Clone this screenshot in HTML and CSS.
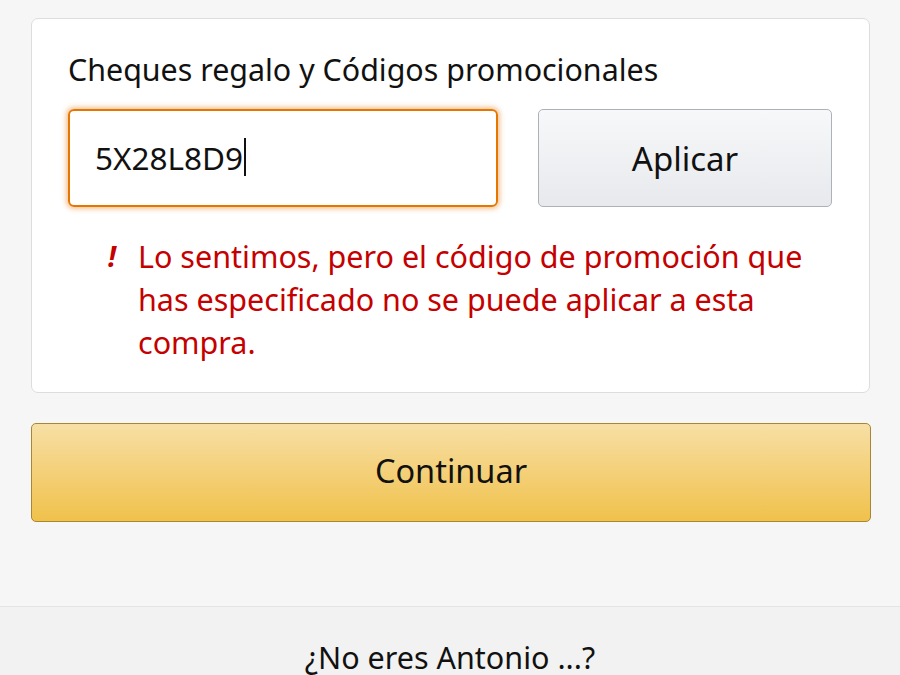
FILE: index.html
```html
<!DOCTYPE html>
<html lang="es">
<head>
<meta charset="utf-8">
<link rel="stylesheet" href="styles.css">
</head>
<body>
<div class="page">
  <div class="card">
    <div class="label">Cheques regalo y Códigos promocionales</div>
    <div class="row">
      <div class="input"><span>5X28L8D9</span><span class="caret"></span></div>
      <button class="apply">Aplicar</button>
    </div>
    <div class="error">
      <span class="bang">!</span>
      <span class="msg">Lo sentimos, pero el código de promoción que has especificado no se puede aplicar a esta compra.</span>
    </div>
  </div>
  <button class="continue">Continuar</button>
</div>
<div class="footer">¿No eres Antonio ...?</div>
</body>
</html>
```
FILE: styles.css
```css
* { box-sizing: border-box; }
html, body { margin: 0; padding: 0; }
body {
  background: #f6f6f6;
  font-family: "Noto Sans", "Open Sans", sans-serif;
  color: #111;
  width: 900px;
  height: 675px;
  overflow: hidden;
}
.page {
  padding: 18px 30px 0 31px;
  height: 606px;
}
.card {
  background: #fff;
  border: 1px solid #dddddd;
  border-radius: 7px;
  padding: 32px 20px 0 36px;
  height: 375px;
}
.label {
  font-size: 30.4px;
  line-height: 38px;
  color: #111;
}
.row {
  display: flex;
  gap: 40px;
  margin-top: 20px;
}
.input {
  width: 430px;
  height: 98px;
  border: 2px solid #e77600;
  border-radius: 6px;
  box-shadow: 0 0 5px 2px rgba(228, 121, 17, 0.45);
  display: flex;
  align-items: center;
  padding-left: 25px;
  padding-bottom: 2px;
  font-size: 31.5px;
  color: #111;
}
.caret {
  display: inline-block;
  width: 2px;
  height: 38px;
  background: #111;
  margin-left: 1px;
}
.apply {
  width: 294px;
  height: 98px;
  border: 1px solid #adb1b8;
  border-radius: 5px;
  background: linear-gradient(#f7f8fa, #e7e9ec);
  font-family: inherit;
  font-size: 33px;
  color: #111;
  padding: 0;
}
.error {
  display: flex;
  margin-top: 28px;
  padding-left: 40px;
  color: #c40000;
  font-size: 30.5px;
  line-height: 43px;
}
.bang {
  font-weight: bold;
  font-style: italic;
  width: 30px;
  flex: none;
  font-size: 28px;
}
.msg {
  width: 685px;
}
.continue {
  display: block;
  width: 840px;
  height: 99px;
  margin-top: 30px;
  border: 1px solid #a88734;
  border-radius: 5px;
  background: linear-gradient(#f7dfa5, #f0c14b);
  font-family: inherit;
  font-size: 32.5px;
  color: #111;
  padding: 0 0 4px 0;
}
.footer {
  border-top: 1px solid #e4e4e4;
  background: #f2f2f2;
  height: 69px;
  text-align: center;
  font-size: 30.5px;
  line-height: 34px;
  padding-top: 33px;
  color: #111;
}
```
